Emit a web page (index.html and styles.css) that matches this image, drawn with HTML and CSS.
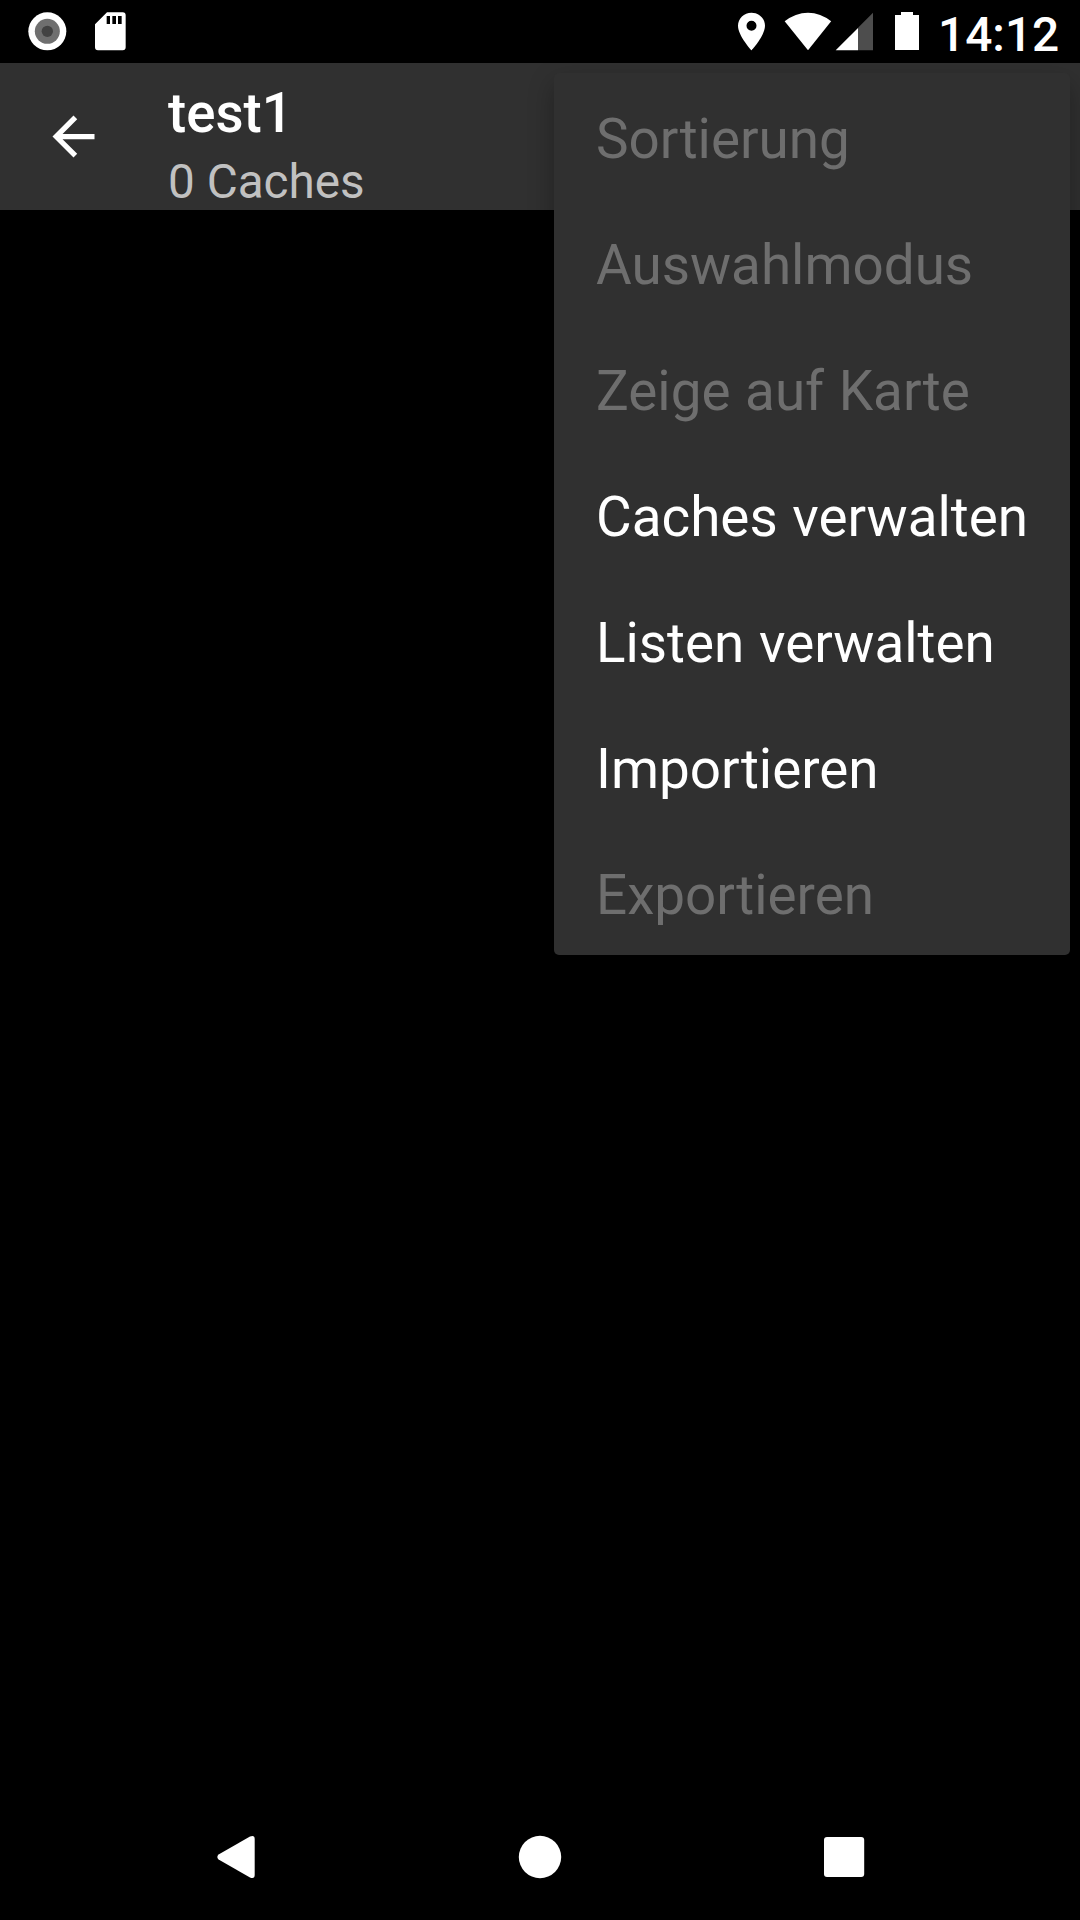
FILE: index.html
```html
<!DOCTYPE html>
<html lang="de">
<head>
<meta charset="utf-8">
<title>test1</title>
<link rel="stylesheet" href="styles.css">
</head>
<body>
<div class="screen">
  <header class="status-bar">
    <svg class="status-icons" width="130" height="63" viewBox="0 0 390 189">
      <circle cx="142" cy="94" r="57" fill="#fff"/>
      <circle cx="142" cy="94" r="37.5" fill="#6f6f6f"/>
      <circle cx="142" cy="94" r="17" fill="#424242"/>
      <path fill="#fff" fill-rule="evenodd" d="M321 37H368Q377 37 377 46V142Q377 151 368 151H294Q285 151 285 142V73ZM320 48V72H330V48ZM337 48V72H348V48ZM354 48V72H365V48Z"/>
    </svg>
    <div class="status-right">
      <svg class="status-icons" width="190" height="63" viewBox="45 0 570 189" fill="#fff">
        <path fill-rule="evenodd" d="M94.500 38C72 38 54 55.500 54 77C54 107 94.500 151 94.500 151C94.500 151 135 107 135 77C135 55.500 117 38 94.500 38ZM94.500 62A15 15 0 1 1 94.500 92A15 15 0 1 1 94.500 62Z"/>
        <path d="M264 151L194 64Q226 38 264 38T333.500 64Z"/>
        <path fill="#4d4d4d" d="M414 83L459 38V151H414Z"/>
        <path d="M347 151L414 84V151Z"/>
        <path d="M543 36H579V45H597V150H525V45H543Z"/>
      </svg>
      <span class="clock">14:12</span>
    </div>
  </header>
  <div class="app-bar">
    <svg class="back" width="63" height="63" viewBox="0 0 24 24"><path fill="#fff" d="M20 11H7.830l5.590-5.590L12 4l-8 8 8 8 1.410-1.410L7.830 13H20v-2z"/></svg>
    <div class="titles">
      <div class="title">test1</div>
      <div class="subtitle">0 Caches</div>
    </div>
  </div>
  <main class="content"></main>
  <nav class="nav-bar">
    <svg width="48" height="48" viewBox="0 0 48 48"><path fill="#fff" d="M6.600 21.500L38 3.500Q42.700 1.700 42.700 6V42Q42.700 46.300 38 44.500L6.600 26.500Q4 24 6.600 21.500Z"/></svg>
    <svg width="48" height="48" viewBox="0 0 48 48"><circle cx="24" cy="24" r="21.200" fill="#fff"/></svg>
    <svg width="48" height="48" viewBox="0 0 48 48"><rect x="4" y="4" width="40.200" height="40" rx="3" fill="#fff"/></svg>
  </nav>
  <ul class="menu">
    <li class="item disabled">Sortierung</li>
    <li class="item disabled">Auswahlmodus</li>
    <li class="item disabled">Zeige auf Karte</li>
    <li class="item">Caches verwalten</li>
    <li class="item">Listen verwalten</li>
    <li class="item">Importieren</li>
    <li class="item disabled">Exportieren</li>
  </ul>
</div>
</body>
</html>
```
FILE: styles.css
```css
* { box-sizing: border-box; }
body {
  margin: 0;
  background: #000;
  color: #fff;
  font-family: Roboto, sans-serif;
}
svg { display: block; flex: none; }
.screen {
  position: relative;
  display: flex;
  flex-direction: column;
  width: 1080px;
  height: 1920px;
  overflow: hidden;
}
.status-bar {
  position: relative;
  z-index: 2;
  display: flex;
  justify-content: space-between;
  height: 63px;
  background: #000;
}
.status-right {
  display: flex;
  padding-right: 21px;
}
.clock {
  width: 121px;
  margin-left: 13px;
  font-size: 47.800px;
  font-weight: 500;
  line-height: 71px;
  white-space: nowrap;
}
.app-bar {
  display: flex;
  align-items: flex-start;
  gap: 63px;
  height: 147px;
  padding: 0 42px;
  background: #303030;
}
.back { align-self: center; }
.titles { padding-top: 16px; }
.title {
  font-size: 54.600px;
  font-weight: 500;
  line-height: 68px;
}
.subtitle {
  font-size: 47.700px;
  line-height: 71px;
  color: #c1c1c1;
}
.content { flex: 1; }
.nav-bar {
  display: flex;
  align-items: center;
  justify-content: space-between;
  height: 126px;
  padding: 0 212px;
}
.menu {
  position: absolute;
  z-index: 1;
  top: 73px;
  right: 10px;
  width: 516px;
  margin: 0;
  padding: 0;
  list-style: none;
  background: #303030;
  border-radius: 5px;
  box-shadow: 0 10px 26px rgba(0, 0, 0, 0.3);
}
.item {
  height: 126px;
  padding: 6px 42px 0;
  font-size: 54.800px;
  line-height: 120px;
  word-spacing: 1px;
  white-space: nowrap;
}
.disabled { color: #6e6e6e; }
```
